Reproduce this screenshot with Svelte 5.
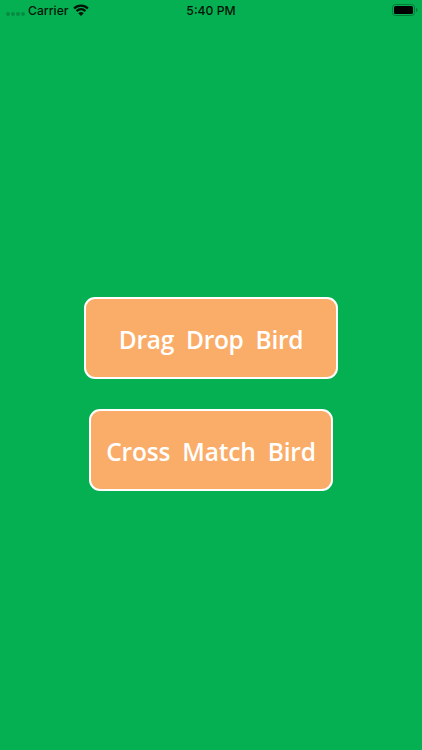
<script lang="ts">
  const carrier = 'Carrier';
  const time = '5:40 PM';

  const games = [
    { id: 'drag', label: 'Drag Drop Bird' },
    { id: 'match', label: 'Cross Match Bird' },
  ];
</script>

<div class="screen">
  <header class="status-bar">
    <div class="network">
      <div class="signal">
        <i></i><i></i><i></i><i></i>
      </div>
      <span class="carrier">{carrier}</span>
      <svg class="wifi" viewBox="0 0 16 12" width="16" height="12">
        <path
          d="M1.1 4.5a9.6 9.6 0 0 1 13.8 0M3.6 7.1a6.1 6.1 0 0 1 8.8 0"
          fill="none"
          stroke="#001506"
          stroke-width="2.3"
        />
        <path d="M8 12 5.3 9.3a3.8 3.8 0 0 1 5.4 0z" fill="#001506" />
      </svg>
    </div>
    <span class="time">{time}</span>
    <svg class="battery" viewBox="0 0 26 12" width="26" height="12">
      <rect x="0.5" y="0.5" width="22" height="11" rx="3" fill="none" stroke="#047c38" />
      <rect x="2" y="2" width="19" height="8" rx="1.6" fill="#000" />
      <path d="M24 4v4q1.6-.6 1.6-2T24 4z" fill="#047c38" />
    </svg>
  </header>

  <main class="menu">
    {#each games as game (game.id)}
      <button class="game {game.id}">{game.label}</button>
    {/each}
  </main>
</div>

<style>
  :global(body) {
    background: #05b053;
  }
  .screen {
    display: flex;
    flex-direction: column;
    height: 750px;
    overflow: hidden;
    background: #05b053;
  }
  .status-bar {
    display: grid;
    grid-template-columns: 1fr auto 1fr;
    align-items: center;
    height: 20px;
    padding: 0 4px;
    font-family: Inter, sans-serif;
    font-size: 12.2px;
    font-weight: 500;
    color: #001506;
  }
  .network {
    display: flex;
    align-items: center;
    padding-left: 2px;
  }
  .signal {
    display: flex;
    gap: 1px;
    width: 22px;
    padding-top: 7px;
  }
  .signal i {
    width: 4px;
    height: 4px;
    border-radius: 50%;
    background: #058c41;
  }
  .wifi {
    margin-left: 4px;
  }
  .battery {
    justify-self: end;
  }
  .menu {
    display: flex;
    flex-direction: column;
    align-items: center;
    gap: 30px;
    padding-top: 277px;
  }
  .game {
    box-sizing: border-box;
    height: 82px;
    padding: 3px 0 0;
    border: 2px solid #fff;
    border-radius: 11px;
    background: #faac69;
    color: #fff;
    font-family: 'Open Sans', sans-serif;
    font-size: 24.5px;
    font-weight: 600;
    letter-spacing: -0.3px;
    word-spacing: 6px;
    white-space: nowrap;
  }
  .drag {
    width: 254px;
  }
  .match {
    width: 244px;
    letter-spacing: -0.2px;
  }
</style>
